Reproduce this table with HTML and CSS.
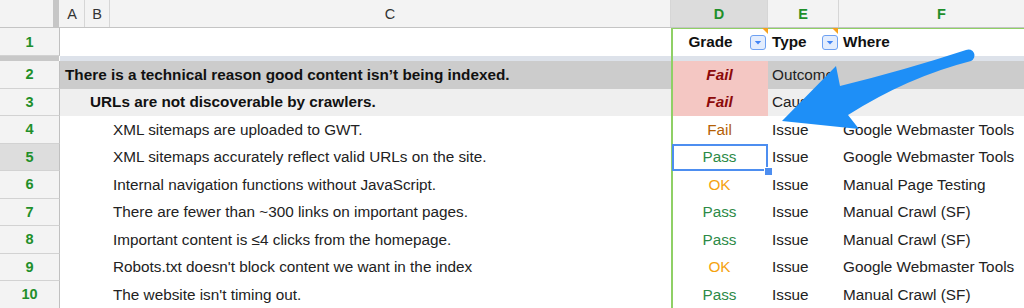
FILE: index.html
```html
<!DOCTYPE html>
<html>
<head>
<meta charset="utf-8">
<link rel="stylesheet" href="styles.css">
</head>
<body>
<div class="sheet">
  <div class="row colhead">
    <div class="corner"></div>
    <div class="ch">A</div>
    <div class="ch">B</div>
    <div class="ch">C</div>
    <div class="ch flt selcol">D</div>
    <div class="ch flt">E</div>
    <div class="ch flt">F</div>
  </div>

  <div class="row r1">
    <div class="rh">1</div>
    <div class="c span3"></div>
    <div class="c d hdr note"><span class="lbl">Grade</span><span class="fbtn"><svg width="16" height="15" viewBox="0 0 16 15"><rect x="0.5" y="0.5" width="15" height="14" rx="2.5" fill="#e3edfd" stroke="#6ea1f2"/><path d="M4.8 6h6.4l-3.2 3.4z" fill="#4285f4"/></svg></span></div>
    <div class="c e hdr note top"><span class="lbl left">Type</span><span class="fbtn e-btn"><svg width="16" height="15" viewBox="0 0 16 15"><rect x="0.5" y="0.5" width="15" height="14" rx="2.5" fill="#e3edfd" stroke="#6ea1f2"/><path d="M4.8 6h6.4l-3.2 3.4z" fill="#4285f4"/></svg></span></div>
    <div class="c f hdr top">Where</div>
  </div>

  <div class="row band">
    <div class="rh-band"></div>
    <div class="bf span3"></div>
    <div class="bf d"></div>
    <div class="bf"></div>
    <div class="bf"></div>
  </div>

  <div class="row">
    <div class="rh">2</div>
    <div class="c span3 lvl0 dark bold">There is a technical reason good content isn’t being indexed.</div>
    <div class="c d pink failx">Fail</div>
    <div class="c e dark">Outcome</div>
    <div class="c f dark"></div>
  </div>

  <div class="row">
    <div class="rh">3</div>
    <div class="c light"></div>
    <div class="c span2 lvl1 light bold">URLs are not discoverable by crawlers.</div>
    <div class="c d pink failx">Fail</div>
    <div class="c e light">Cause</div>
    <div class="c f light"></div>
  </div>

  <div class="row">
    <div class="rh">4</div>
    <div class="c"></div><div class="c"></div>
    <div class="c lvl2">XML sitemaps are uploaded to GWT.</div>
    <div class="c d fail">Fail</div>
    <div class="c e">Issue</div>
    <div class="c f">Google Webmaster Tools</div>
  </div>

  <div class="row">
    <div class="rh cur">5</div>
    <div class="c"></div><div class="c"></div>
    <div class="c lvl2">XML sitemaps accurately reflect valid URLs on the site.</div>
    <div class="c d pass active">Pass</div>
    <div class="c e">Issue</div>
    <div class="c f">Google Webmaster Tools</div>
  </div>

  <div class="row">
    <div class="rh">6</div>
    <div class="c"></div><div class="c"></div>
    <div class="c lvl2">Internal navigation functions without JavaScript.</div>
    <div class="c d ok">OK</div>
    <div class="c e">Issue</div>
    <div class="c f">Manual Page Testing</div>
  </div>

  <div class="row">
    <div class="rh">7</div>
    <div class="c"></div><div class="c"></div>
    <div class="c lvl2">There are fewer than ~300 links on important pages.</div>
    <div class="c d pass">Pass</div>
    <div class="c e">Issue</div>
    <div class="c f">Manual Crawl (SF)</div>
  </div>

  <div class="row">
    <div class="rh">8</div>
    <div class="c"></div><div class="c"></div>
    <div class="c lvl2">Important content is ≤4 clicks from the homepage.</div>
    <div class="c d pass">Pass</div>
    <div class="c e">Issue</div>
    <div class="c f">Manual Crawl (SF)</div>
  </div>

  <div class="row">
    <div class="rh">9</div>
    <div class="c"></div><div class="c"></div>
    <div class="c lvl2">Robots.txt doesn't block content we want in the index</div>
    <div class="c d ok">OK</div>
    <div class="c e">Issue</div>
    <div class="c f">Google Webmaster Tools</div>
  </div>

  <div class="row">
    <div class="rh">10</div>
    <div class="c"></div><div class="c"></div>
    <div class="c lvl2">The website isn't timing out.</div>
    <div class="c d pass">Pass</div>
    <div class="c e">Issue</div>
    <div class="c f">Manual Crawl (SF)</div>
  </div>
</div>

<svg class="arrow" width="1024" height="308" viewBox="0 0 1024 308">
  <path d="M782,121 L836,66 L840,86 Q905,70 966,50 A5.5,5.5 0 0 1 971,61 Q908,77 848,115 L859,129 Z" fill="#1e8ff7"/>
</svg>
</body>
</html>
```

FILE: styles.css
```css
html, body {
  margin: 0;
  padding: 0;
  background: #ffffff;
  overflow: hidden;
}

body {
  width: 1024px;
  height: 308px;
  position: relative;
  font-family: "Liberation Sans", Arial, Helvetica, sans-serif;
  font-size: 15.3px;
  color: #222222;
}

.sheet {
  width: 1024px;
  overflow: hidden;
}

.row {
  display: grid;
  grid-template-columns: 60px 25px 25px 561px 97px 71px 206px;
  height: 27.5px;
}

/* column header row */
.colhead {
  height: 28px;
  background: #f3f3f3;
  border-bottom: 1px solid #c4c4c4;
  box-sizing: border-box;
}

.corner {
  background: #f3f3f3;
  border-right: 6px solid #c6c6c6;
  box-sizing: border-box;
  width: 59px;
}

.ch {
  display: flex;
  align-items: center;
  justify-content: center;
  font-size: 14.5px;
  color: #333333;
  border-right: 1px solid #d6d6d6;
  box-sizing: border-box;
}

.ch.flt {
  color: #1f8f2a;
  font-weight: bold;
}

.ch.selcol {
  background: #dcdcdc;
}

/* row 1 */
.r1 {
  height: 28px;
}

/* frozen divider band */
.band {
  height: 5px;
}

.rh-band {
  background: #c8c8c8;
  width: 59px;
}

.bf {
  background: #dde2ea;
}

.bf.d {
  box-shadow: inset 2px 0 0 #8fd066;
}

/* row headers */
.rh {
  display: flex;
  align-items: center;
  justify-content: center;
  background: #f3f3f3;
  border-right: 1px solid #c0c0c0;
  border-bottom: 1px solid #d2d2d2;
  box-sizing: border-box;
  font-size: 14.5px;
  font-weight: bold;
  color: #1f8f2a;
}

.rh.cur {
  background: #dddddd;
}

/* cells */
.c {
  display: flex;
  align-items: center;
  white-space: nowrap;
  overflow: hidden;
  min-width: 0;
}

.span3 {
  grid-column: span 3;
}

.span2 {
  grid-column: span 2;
}

.lvl0 { padding-left: 5px; }
.lvl1 { padding-left: 5px; }
.lvl2 { padding-left: 3px; }

.bold {
  font-weight: bold;
  color: #111111;
}

.dark { background: #cccccc; }
.light { background: #efefef; }
.pink { background: #f4c7c3; }

.c.d {
  justify-content: center;
  box-shadow: inset 2px 0 0 #8fd066;
  position: relative;
}

.c.e, .c.f {
  padding-left: 4px;
}

.hdr {
  font-weight: bold;
  color: #111111;
}

.c.d.hdr {
  justify-content: flex-start;
  box-shadow: inset 2px 0 0 #8fd066, inset 0 1px 0 #8fd066;
}

.c.top {
  box-shadow: inset 0 1px 0 #8fd066;
}

.hdr .lbl {
  flex: 1;
  text-align: center;
  padding-left: 2px;
}

.hdr .lbl.left {
  text-align: left;
  padding-left: 0;
}

.fbtn {
  display: flex;
  width: 16px;
  height: 15px;
  margin-right: 2px;
  margin-left: 2px;
  margin-top: 1px;
}

.fbtn.e-btn {
  margin-right: 1px;
}

.note {
  position: relative;
}

.note::after {
  content: "";
  position: absolute;
  top: 0;
  right: 0;
  width: 0;
  height: 0;
  border-style: solid;
  border-width: 0 6px 6px 0;
  border-color: transparent #f6a11c transparent transparent;
}

.c.e.note::after {
  right: 1px;
}

/* grade colours */
.failx {
  font-weight: bold;
  font-style: italic;
  color: #8c0a0a;
}

.fail { color: #b45f06; }
.pass { color: #2d8a47; }
.ok { color: #f5a20f; }

/* active cell */
.active::before {
  content: "";
  position: absolute;
  left: 1px;
  top: 0;
  right: 0;
  bottom: 0;
  border: 2px solid #4d8ef0;
}

.active::after {
  content: "";
  position: absolute;
  right: -5px;
  bottom: -5px;
  width: 7px;
  height: 7px;
  background: #4d8ef0;
  border: 1px solid #ffffff;
  z-index: 2;
}

.active {
  overflow: visible;
  z-index: 1;
}

/* callout arrow */
.arrow {
  position: absolute;
  left: 0;
  top: 0;
  pointer-events: none;
  z-index: 5;
}
```
